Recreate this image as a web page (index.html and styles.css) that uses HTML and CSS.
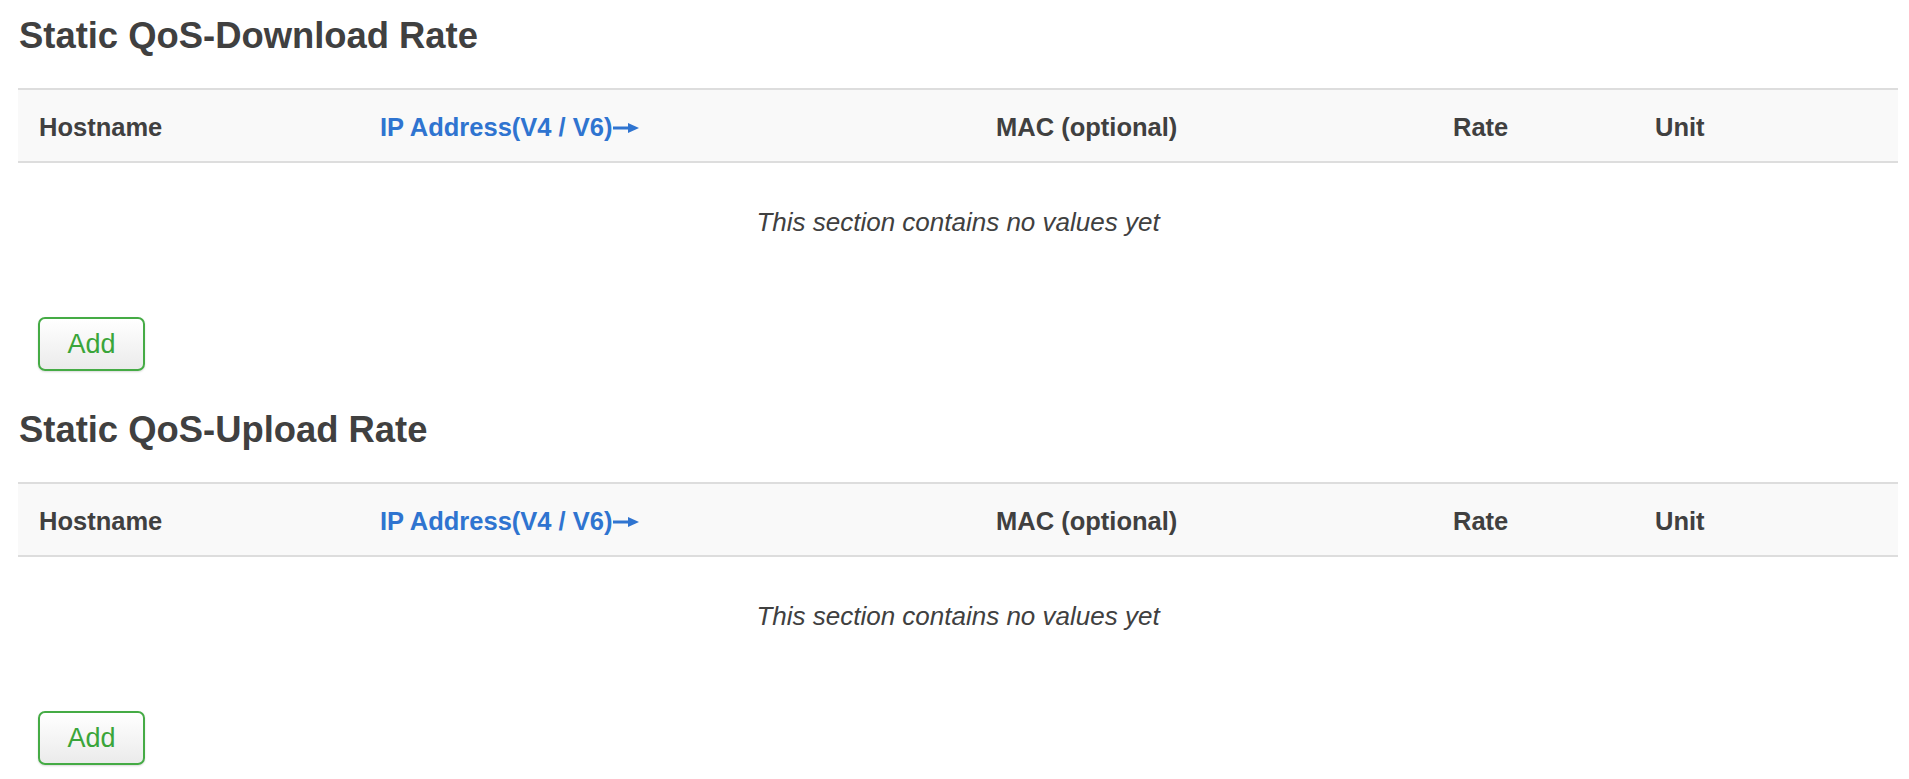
FILE: index.html
```html
<!DOCTYPE html>
<html lang="en">
<head>
<meta charset="utf-8">
<title>Static QoS</title>
<link rel="stylesheet" href="styles.css">
</head>
<body>
<div class="page">
  <section class="section">
    <h2 class="title">Static QoS-Download Rate</h2>
    <div class="table">
      <div class="thead">
        <div class="th">Hostname</div>
        <div class="th th-link">IP Address(V4 / V6)<svg class="arrow" width="26" height="10" viewBox="0 0 26 10"><rect x="0" y="3.5" width="16" height="3" fill="currentColor"/><path d="M15 0 L26 5 L15 10 Z" fill="currentColor"/></svg></div>
        <div class="th">MAC (optional)</div>
        <div class="th">Rate</div>
        <div class="th">Unit</div>
      </div>
      <div class="empty">This section contains no values yet</div>
    </div>
    <div class="actions"><button class="btn-add" type="button">Add</button></div>
  </section>
  <section class="section">
    <h2 class="title">Static QoS-Upload Rate</h2>
    <div class="table">
      <div class="thead">
        <div class="th">Hostname</div>
        <div class="th th-link">IP Address(V4 / V6)<svg class="arrow" width="26" height="10" viewBox="0 0 26 10"><rect x="0" y="3.5" width="16" height="3" fill="currentColor"/><path d="M15 0 L26 5 L15 10 Z" fill="currentColor"/></svg></div>
        <div class="th">MAC (optional)</div>
        <div class="th">Rate</div>
        <div class="th">Unit</div>
      </div>
      <div class="empty">This section contains no values yet</div>
    </div>
    <div class="actions"><button class="btn-add" type="button">Add</button></div>
  </section>
</div>
</body>
</html>
```

FILE: styles.css
```css
html, body {
  margin: 0;
  padding: 0;
  background: #ffffff;
}

body {
  font-family: "Liberation Sans", Arial, Helvetica, sans-serif;
  color: #404040;
  font-size: 25.5px;
}

.page {
  padding: 14px 11px 0 18px;
}

.section {
  display: flex;
  flex-direction: column;
  height: 394px;
}

.title {
  margin: 0 0 0 1px;
  font-size: 36.4px;
  line-height: 44px;
  font-weight: bold;
  color: #404040;
}

.table {
  margin-top: 30px;
}

.thead {
  display: grid;
  grid-template-columns: 341px 616px 457px 202px 1fr;
  height: 71px;
  align-items: center;
  background: #f9f9f9;
  border-top: 2px solid #dddddd;
  border-bottom: 2px solid #dddddd;
}

.th {
  padding-left: 21px;
  padding-top: 4px;
  font-weight: bold;
  color: #404040;
  white-space: nowrap;
}

.th-link {
  color: #2f74d0;
}

.arrow {
  vertical-align: 3px;
  margin-left: 1px;
}

.empty {
  height: 118px;
  display: flex;
  align-items: center;
  justify-content: center;
  font-style: italic;
  font-size: 26px;
  color: #404040;
}

.actions {
  margin-top: 36px;
  padding-left: 20px;
}

.btn-add {
  width: 107px;
  height: 54px;
  border: 2px solid #45ab45;
  border-radius: 7px;
  background: linear-gradient(#ffffff, #ebebeb);
  box-shadow: 0 1px 2px rgba(0, 0, 0, 0.15);
  color: #3aa53a;
  font-family: "Liberation Sans", Arial, Helvetica, sans-serif;
  font-size: 27px;
  padding: 0;
  cursor: pointer;
}
```
